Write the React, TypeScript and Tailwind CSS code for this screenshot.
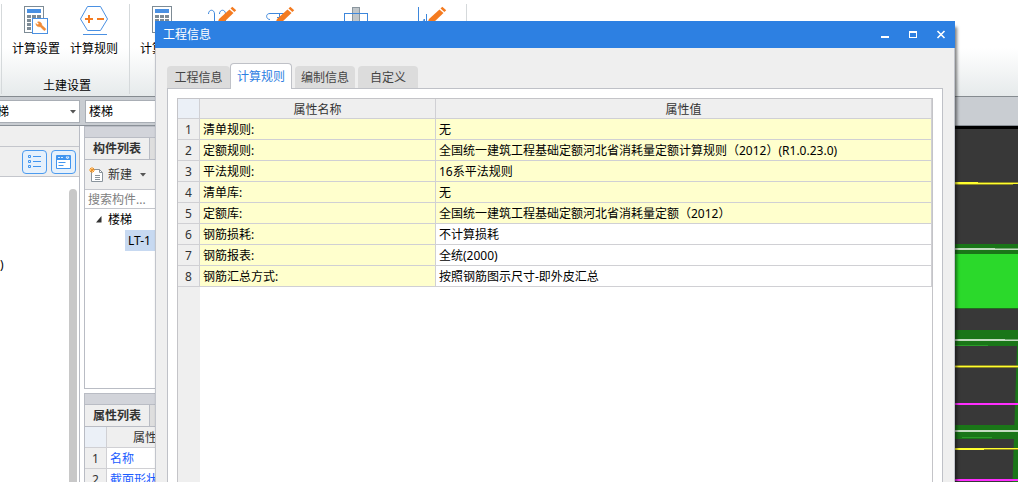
import type { ReactNode } from "react";

const rules = [
  { name: "清单规则:", value: "无", locked: true },
  { name: "定额规则:", value: "全国统一建筑工程基础定额河北省消耗量定额计算规则（2012）(R1.0.23.0)", locked: true },
  { name: "平法规则:", value: "16系平法规则", locked: true },
  { name: "清单库:", value: "无", locked: true },
  { name: "定额库:", value: "全国统一建筑工程基础定额河北省消耗量定额（2012）", locked: true },
  { name: "钢筋损耗:", value: "不计算损耗", locked: false },
  { name: "钢筋报表:", value: "全统(2000)", locked: false },
  { name: "钢筋汇总方式:", value: "按照钢筋图示尺寸-即外皮汇总", locked: false },
];

const tabs = ["工程信息", "计算规则", "编制信息", "自定义"];

/* ---------- ribbon icons ---------- */

const Calculator = ({ children }: { children?: ReactNode }) => (
  <svg width="28" height="30" viewBox="0 0 28 30" fill="none" shapeRendering="crispEdges">
    <rect x="2.5" y="1.5" width="19" height="26" fill="#fff" stroke="#7d8b95" />
    <rect x="5" y="4" width="14" height="4" fill="#4a90e2" />
    <g fill="#7d8b95">
      {[10, 14, 18, 22].map((y) =>
        [5, 10, 15].map((x) => <rect key={`${x}-${y}`} x={x} y={y} width="4" height="3" />),
      )}
    </g>
    {children}
  </svg>
);

const SettingsIcon = () => (
  <Calculator>
    <rect x="10.5" y="13.5" width="15" height="15" fill="#fff" stroke="#4a90e2" />
    <g shapeRendering="auto">
      <path
        d="M15.500 17c2-.8 4.500.6 4.300 3.200l3.700 3.400c.8 1-.7 2.500-1.700 1.700l-3.500-3.600c-2.300.5-4.300-.9-4.500-3.200l1.900 1.200 1.300-1z"
        fill="#f08a35"
        stroke="#f08a35"
        strokeWidth=".5"
      />
    </g>
  </Calculator>
);

const RuleIcon = () => (
  <svg width="30" height="30" viewBox="0 0 30 30" fill="none">
    <path d="M8.500 1.500h13l7 12.500-7 11.500h-13L1.500 14z" fill="#fff" stroke="#4a90e2" />
    <path d="M6 14h8M10 10v8M18 14h7" stroke="#f47b20" strokeWidth="2" />
    <path d="M4 29.500h24" stroke="#4a90e2" />
  </svg>
);

const Pencil = () => (
  <g fill="#f47b20">
    <path d="m11 19 2-5L23.500 4.500l4 3.500L16 19l-5 2z" />
    <path d="m24.500 3.500 1.800-1.700 3.900 3.500-1.800 1.800z" />
  </g>
);

const HookIcon = () => (
  <svg width="32" height="30" viewBox="0 0 32 30" fill="none">
    <path d="M2.500 9c0-5 6-5 6 0v14M13.500 9c0-5 6-5 6 0v14" stroke="#3d87dc" />
    <Pencil />
  </svg>
);

const StirrupIcon = () => (
  <svg width="32" height="30" viewBox="0 0 32 30" fill="none">
    <path d="M20 8.500H6c-5 0-4 6 0 6M15.500 9v10M13 12.500h6" stroke="#3d87dc" />
    <Pencil />
  </svg>
);

const ColumnIcon = () => (
  <svg width="26" height="30" viewBox="0 0 26 30" fill="none" shapeRendering="crispEdges">
    <rect x="9.5" y="2.5" width="7" height="26" fill="#c0c6ca" stroke="#8b969e" />
    <rect x="1.5" y="8.5" width="23" height="14" stroke="#3d87dc" />
  </svg>
);

const BarIcon = () => (
  <svg width="32" height="30" viewBox="0 0 32 30" fill="none">
    <path d="M2.500 2v20M8.500 14v8M10.500 9v13M3 17c2 1 5-1 5-3" stroke="#3d87dc" />
    <Pencil />
  </svg>
);

const tools = [
  { label: "计算设置", icon: <Calculator /> },
  { label: "计算规则", icon: <HookIcon /> },
  { label: "弯钩设置", icon: <StirrupIcon /> },
  { label: "损耗统计模板", icon: <ColumnIcon />, wide: true },
  { label: "比重设置", icon: <BarIcon /> },
];

const RibbonButton = ({ icon, label, wide }: { icon: ReactNode; label: string; wide?: boolean }) => (
  <button className={`flex shrink-0 flex-col items-center ${wide ? "w-[84px]" : "w-12"}`}>
    <span className="flex h-[37px] items-start pt-px">{icon}</span>
    <span className="whitespace-nowrap leading-4">{label}</span>
  </button>
);

const Ribbon = () => (
  <div className="flex h-[97px] shrink-0 overflow-hidden border-b border-[#858b90] bg-linear-to-b from-white from-50% to-[#e6eaeb] pt-1 pb-0.5 pl-px">
    <div className="flex flex-col justify-between border-l border-[#d5d9db] px-2.5 pr-[11px]">
      <div className="flex gap-2.5">
        <RibbonButton icon={<SettingsIcon />} label="计算设置" />
        <RibbonButton icon={<RuleIcon />} label="计算规则" />
      </div>
      <span className="pl-1 text-center leading-4">土建设置</span>
    </div>
    <div className="flex gap-2.5 border-x border-[#d5d9db] px-2.5">
      {tools.map((t, i) => (
        <RibbonButton key={i} {...t} />
      ))}
    </div>
  </div>
);

const Caret = () => (
  <svg width="6" height="4" viewBox="0 0 6 4" fill="#555">
    <path d="M0 0h6L3 3.500z" />
  </svg>
);

const FilterBar = () => (
  <div className="flex h-[29px] shrink-0 items-center gap-[5px] border-b border-[#8b9198] bg-[#c9cdd2]">
    <div className="relative flex w-20 justify-end overflow-hidden">
      <select
        aria-label="构件类别"
        className="h-[23px] w-[108px] shrink-0 appearance-none border border-[#a9aeb5] bg-white px-3 pt-0.5 leading-4"
      >
        <option>楼梯</option>
      </select>
      <span className="pointer-events-none absolute top-2.5 right-1">
        <Caret />
      </span>
    </div>
    <select
      aria-label="构件类型"
      className="h-[23px] w-40 appearance-none border border-[#a9aeb5] bg-white px-[3px] pt-0.5 leading-4"
    >
      <option>楼梯</option>
    </select>
  </div>
);

const Navigator = () => (
  <div className="flex w-20 shrink-0 flex-col border-r border-[#b9bcc4]">
    <div className="h-[21px] shrink-0 border-b border-[#c4c6cc] bg-[#efefef]" />
    <div className="flex h-[30px] shrink-0 items-center justify-end gap-1 border-b border-[#c4c6cc] bg-[#efefef] pr-[3px]">
      <button aria-label="列表" className="flex h-6 w-[25px] items-center justify-center rounded border border-[#4c9bef] bg-[#e6f1fc]">
        <svg width="13" height="15" viewBox="0 0 13 15" fill="none" stroke="#4195ef">
          <path d="M.5 1.500h2v2h-2zM.5 6.500h2v2h-2zM.5 11.500h2v2h-2zM5 2.500h8M5 7.500h8M5 12.500h8" />
        </svg>
      </button>
      <button aria-label="窗口" className="flex h-6 w-[25px] items-center justify-center rounded border border-[#4c9bef] bg-[#e6f1fc]">
        <svg width="15" height="14" viewBox="0 0 15 14" fill="none">
          <path d="M.5.5h14v13H.5z" fill="#fff" stroke="#4195ef" />
          <path d="M1 1h13v4H1z" fill="#4195ef" />
          <path d="M2 2.500h2M5 2.500h2M10 2h3l-1.500 2z" stroke="#fff" strokeWidth=".8" />
          <path d="M2.500 7.500h7M2.500 10.500h5" stroke="#4195ef" />
        </svg>
      </button>
    </div>
    <div className="flex min-h-0 flex-1 justify-between pt-3 pr-0.5">
      <span className="mt-[68px] leading-4">)</span>
      <div className="w-2 rounded-t bg-[#c8c8c8]" />
    </div>
  </div>
);

const PanelHead = ({ title }: { title: string }) => (
  <>
    <div className="h-3 shrink-0 border-y border-[#b9bcc4] bg-[#d2d4da]" />
    <div className="flex h-[22px] shrink-0 border-b border-[#b9bcc4] bg-[#dedede]">
      <h2 className="w-[65px] border-r border-[#b9bcc4] bg-[#efefef] pt-px pl-2 font-bold leading-5 text-[#333]">{title}</h2>
    </div>
  </>
);

const SidePanels = () => (
  <div className="flex w-60 shrink-0 flex-col gap-1 pl-1">
    <section className="flex h-[263px] shrink-0 flex-col border border-t-0 border-[#b9bcc4]">
      <PanelHead title="构件列表" />
      <div className="flex h-[30px] shrink-0 items-center border-b border-[#c4c6cc] bg-[#efefef] pl-1 text-[#333]">
        <button className="flex items-center gap-1">
          <svg width="15" height="16" viewBox="0 0 15 16" fill="none">
            <path d="M2.500 2.500h8l3 3v9h-11z" fill="#fff" stroke="#8a949c" />
            <path d="M10.500 2.500v3h3M6 8.500h5M6 10.500h5M6 12.500h5" stroke="#8a949c" />
            <path d="M0 3h6M3 0v6M1 1l4 4M5 1 1 5" stroke="#f7941d" />
          </svg>
          <span className="pt-px leading-4">新建</span>
          <span className="ml-1">
            <Caret />
          </span>
        </button>
      </div>
      <input
        aria-label="搜索构件"
        placeholder="搜索构件..."
        className="h-[19px] shrink-0 border-b border-[#c4c6cc] px-[3px] leading-4 placeholder:text-[#808080]"
      />
      <div className="flex h-[21px] items-center gap-1.5 pl-2.5">
        <svg width="7" height="7" viewBox="0 0 7 7" fill="#333">
          <path d="M6.500 0v6.500H1z" />
        </svg>
        <span className="leading-5">楼梯</span>
      </div>
      <div className="ml-10 h-[21px] w-20 bg-[#c7d9f1] pt-px pl-[3px] leading-5">LT-1</div>
    </section>

    <section className="flex flex-1 flex-col border border-t-0 border-[#b9bcc4]">
      <PanelHead title="属性列表" />
      <table className="w-full table-fixed border-separate border-spacing-0">
        <thead>
          <tr className="h-[21px] bg-[#efefef] text-[#333]">
            <th className="w-[22px] border-r border-b border-[#d0d0d4] bg-[#ebf0f7] p-0" />
            <th className="border-b border-[#d0d0d4] p-0 pt-0.5 pl-[26px] text-left font-normal leading-4">属性名称</th>
          </tr>
        </thead>
        <tbody>
          {["名称", "截面形状"].map((n, i) => (
            <tr key={n} className="h-[21px]">
              <td className="border-r border-b border-[#d0d0d4] bg-[#efefef] p-0 pt-0.5 text-center leading-4 text-[#333]">{i + 1}</td>
              <td className="border-b border-[#d0d0d4] p-0 pt-0.5 pl-[3px] leading-4 text-[#1a5cff]">{n}</td>
            </tr>
          ))}
        </tbody>
      </table>
    </section>
  </div>
);

/* Plan view of the model */
const Viewport = () => (
  <div className="flex min-w-0 flex-1 justify-end overflow-hidden border-t-[3px] border-black bg-[#383838]">
    <svg width="80" height="400" viewBox="0 0 80 400" className="shrink-0" shapeRendering="crispEdges">
      <path d="M0 53h80v2H0z" fill="#ffff2e" />
      <path d="M40 53h40v1H40zM0 55h75v1H0z" fill="#8f8a25" />
      <path d="M0 115h80v10H0z" fill="#1a7618" />
      <path d="M0 119h80v2H0z" fill="#c3dcc0" />
      <path d="M57 119h23v1H57z" fill="#76a874" />
      <path d="M0 125h80v54H0z" fill="#2bd92b" />
      <path d="M0 179h80v1H0z" fill="#226b20" />
      <path d="M0 201h80v16H0z" fill="#1a7618" />
      <path d="M0 210h80v2H0z" fill="#c3dcc0" />
      <path d="M67 210h13v1H67z" fill="#76a874" />
      <path d="M0 216h50v1H0z" fill="#2a9c28" />
      <path d="M79 217h1v183h-7z" fill="#1a7618" shapeRendering="auto" />
      <path d="M0 236h80v3H0z" fill="#8f8a25" />
      <path d="M0 237h80v1H0z" fill="#ffff2e" />
      <path d="M0 274h80v2H0z" fill="#ff2eff" />
      <path d="M0 296h80v14H0z" fill="#1a7618" />
      <path d="M0 301h80v2H0z" fill="#c3dcc0" />
      <path d="M24 308h30v1H24z" fill="#2a9c28" />
      <path d="M0 319h80v2H0z" fill="#ffff2e" />
      <path d="M46 320h34v1H46z" fill="#8f8a25" />
      <path d="M0 350h80v2H0z" fill="#ff2eff" />
    </svg>
  </div>
);

const ProjectDialog = () => (
  <div
    role="dialog"
    aria-label="工程信息"
    className="absolute top-[21px] right-[63px] bottom-0 left-[155px] flex flex-col bg-[#efefef] shadow-[2px_6px_3px_rgba(0,0,0,0.5)]"
  >
    <div className="flex h-[27px] shrink-0 items-center justify-between bg-[#2d80e2] px-2 pb-px text-white">
      <h1 className="pt-0.5 leading-5">工程信息</h1>
      <div className="flex gap-4">
        <button aria-label="最小化" className="size-3">
          <svg width="12" height="12" viewBox="0 0 12 12" shapeRendering="crispEdges">
            <path d="M2 8h8v2H2z" fill="#fff" />
          </svg>
        </button>
        <button aria-label="最大化" className="size-3">
          <svg width="12" height="12" viewBox="0 0 12 12" shapeRendering="crispEdges">
            <path d="M2 3h8v7H2zM3 5v4h6V5z" fill="#fff" fillRule="evenodd" />
          </svg>
        </button>
        <button aria-label="关闭" className="size-3">
          <svg width="12" height="12" viewBox="0 0 12 12">
            <path d="m2.500 3 7 7M9.500 3l-7 7" stroke="#fff" strokeWidth="1.600" />
          </svg>
        </button>
      </div>
    </div>

    <div className="flex min-h-0 flex-1 flex-col border-x border-x-[#c2c5cc] px-[11px] pt-[15px]">
      <div role="tablist" className="flex h-[25px] shrink-0 items-end">
        {tabs.map((t) =>
          t === "计算规则" ? (
            <button
              key={t}
              role="tab"
              aria-selected="true"
              className="z-10 -mb-px h-[26px] w-[62px] rounded-t border border-b-0 border-[#bfc1c7] bg-white pt-px text-[#2d80e2]"
            >
              {t}
            </button>
          ) : (
            <button
              key={t}
              role="tab"
              aria-selected="false"
              className="mr-[3px] h-[22px] w-[60px] rounded-t bg-[#dcdcdc] pt-0.5 text-[#444] first:mr-0 first:w-[63px] nth-3:ml-[3px]"
            >
              {t}
            </button>
          ),
        )}
      </div>

      <div className="flex min-h-0 flex-1 flex-col border border-b-0 border-[#bfc1c7] bg-white px-[9px] pt-[9px]">
        <div className="flex min-h-0 flex-1 flex-col overflow-hidden border border-b-0 border-[#c4c4c8]">
          <table className="w-full table-fixed border-separate border-spacing-0">
            <thead>
              <tr className="h-5 bg-[#efefef] text-[#333]">
                <th className="w-[22px] border-r border-b border-[#d0d0d4] bg-[#ebf0f7] p-0" />
                <th className="w-[236px] border-r border-b border-[#d0d0d4] p-0 pt-0.5 font-normal leading-4">属性名称</th>
                <th className="border-r border-b border-[#d0d0d4] p-0 pt-0.5 font-normal leading-4">属性值</th>
              </tr>
            </thead>
            <tbody>
              {rules.map((r, i) => (
                <tr key={i} className="h-[21px]">
                  <td className="border-r border-b border-[#d0d0d4] bg-[#efefef] p-0 pt-0.5 text-center leading-4 text-[#333]">{i + 1}</td>
                  <td className="border-r border-b border-[#d0d0d4] bg-[#ffffcd] p-0 pt-0.5 pl-[3px] leading-4">{r.name}</td>
                  <td
                    className={`border-r border-b border-[#d0d0d4] p-0 pt-0.5 pl-[3px] leading-4 whitespace-nowrap ${
                      r.locked ? "bg-[#ffffcd]" : "bg-white"
                    }`}
                  >
                    {r.value}
                  </td>
                </tr>
              ))}
            </tbody>
          </table>
          <div className="w-[22px] flex-1 bg-[#efefef]" />
        </div>
      </div>
    </div>
  </div>
);

export default function App() {
  return (
    <div className="relative flex h-screen flex-col overflow-hidden bg-white font-['Noto_Sans','Noto_Sans_CJK_SC',sans-serif] text-xs text-black">
      <Ribbon />
      <FilterBar />
      <div className="flex min-h-0 flex-1 overflow-hidden">
        <Navigator />
        <SidePanels />
        <Viewport />
      </div>
      <ProjectDialog />
    </div>
  );
}
